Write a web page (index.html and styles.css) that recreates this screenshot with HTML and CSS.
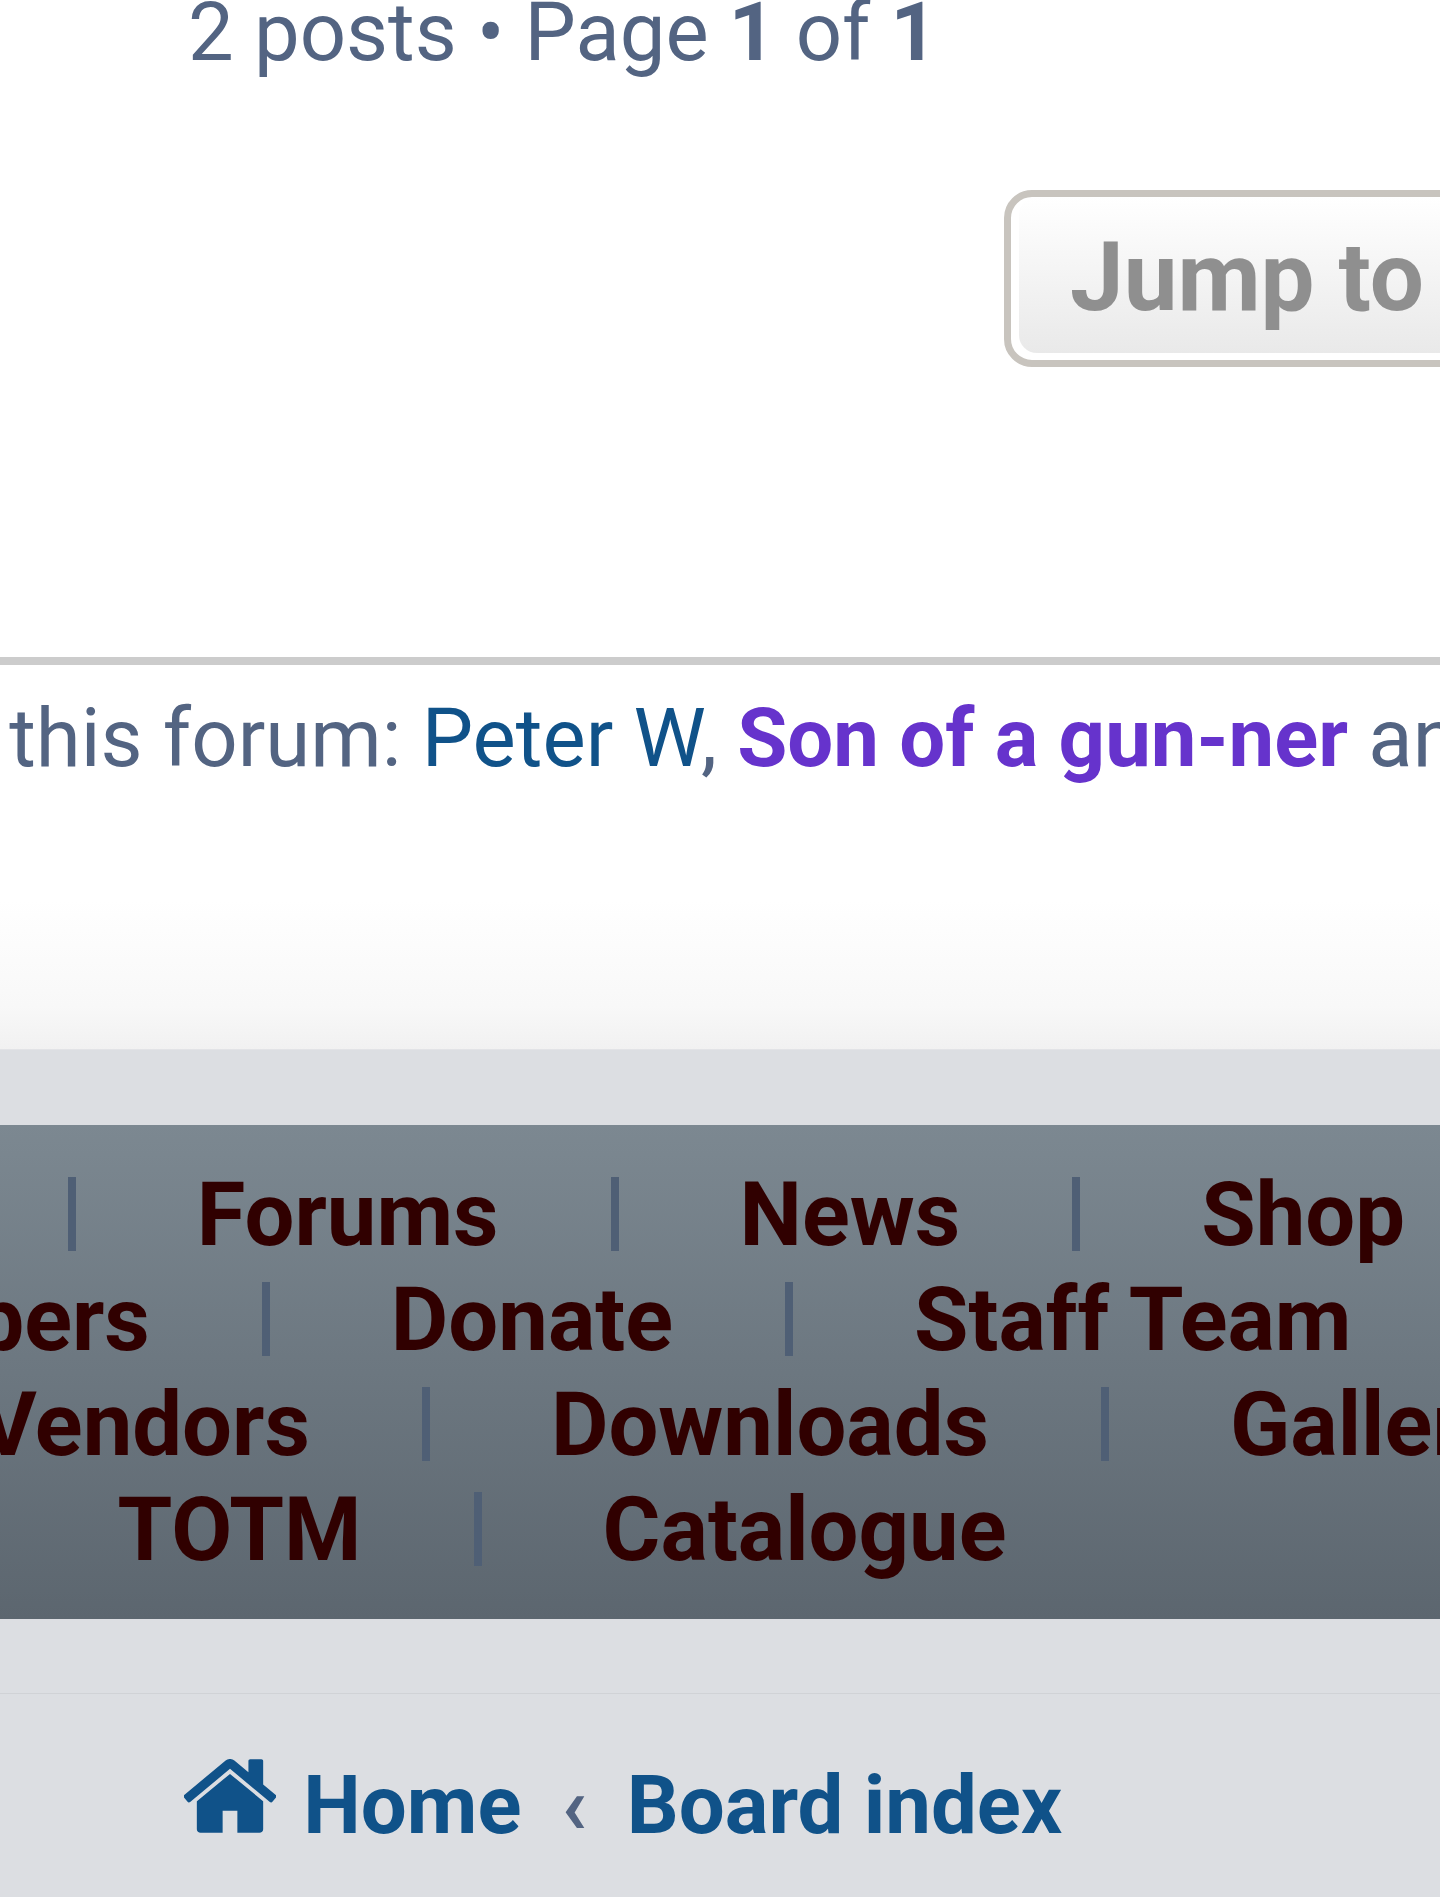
FILE: index.html
```html
<!DOCTYPE html>
<html lang="en">
<head>
  <meta charset="UTF-8" />
  <meta name="viewport" content="width=device-width, initial-scale=1" />
  <title>Board index</title>
  <link rel="stylesheet" href="styles.css">
</head>
<body>
  <div class="wrap">
    <div class="pagination">2 posts • Page <strong>1</strong> of <strong>1</strong></div>

    <div class="action-bar">
      <button class="jump-btn"><span>Jump to</span></button>
    </div>

    <div class="online">
      <p class="online-text">Users browsing this forum: <a href="#">Peter W</a>, <a href="#" class="user-colour">Son of a gun-ner</a> and 5 guests</p>
    </div>
  </div>

  <!-- Main links, rows are centred on a box wider than the window -->
  <nav class="navlinks">
    <div class="nav-row"><a href="#">Home</a><i></i><a href="#">Forums</a><i></i><a href="#">News</a><i></i><a href="#">Shop</a></div>
    <div class="nav-row"><a href="#">Members</a><i></i><a href="#">Donate</a><i></i><a href="#">Staff Team</a></div>
    <div class="nav-row"><a href="#">Art</a><i></i><a href="#">Vendors</a><i></i><a href="#">Downloads</a><i></i><a href="#">Gallery</a></div>
    <div class="nav-row"><a href="#">TOTM</a><i></i><a href="#">Catalogue</a></div>
  </nav>

  <footer class="breadcrumbs">
    <a href="#" class="crumb">
      <svg class="home-icon" viewBox="97 256 1598 1280" aria-hidden="true"><path d="M1472 992v480q0 26-19 45t-45 19h-384v-384h-256v384h-384q-26 0-45-19t-19-45v-480q0-1 .5-3t.5-3l575-474 575 474q1 2 1 6zm223-69l-62 74q-8 9-21 11h-3q-13 0-21-7l-692-577-692 577q-12 8-24 7-13-2-21-11l-62-74q-8-10-7-23.5t11-21.5l719-599q32-26 76-26t76 26l244 204v-195q0-14 9-23t23-9h192q14 0 23 9t9 23v408l219 182q10 8 11 21.5t-7 23.5z"/></svg>
      Home
    </a>
    <span class="crumb-sep">‹</span>
    <a href="#" class="crumb">Board index</a>
  </footer>
</body>
</html>
```

FILE: styles.css
```css
:root {
  --text: #536482;
  --link: #105289;
  --page-bg: #dcdee2;
}

body {
  margin: 0;
  height: 1897px;
  overflow: hidden;
  background: var(--page-bg);
  font-family: Roboto, sans-serif;
  color: var(--text);
}

a {
  color: var(--link);
  text-decoration: none;
}

.wrap {
  display: flow-root;
  height: 1050px;
  background: linear-gradient(to bottom, #fff 0, #fff 900px, #f8f8f8 1006px, #f1f1f1 1050px);
  border-bottom: 1px solid #e2e3e6;
  box-sizing: border-box;
}

.pagination {
  margin-top: -18px;
  padding-left: 188px;
  font-size: 81.4px;
  line-height: 100px;
}

.action-bar {
  display: flex;
  margin-top: 108px;
  padding-left: 1004px;
}

.jump-btn {
  flex: none;
  width: 600px;
  height: 177px;
  padding: 0;
  border: 7px solid #c8c4be;
  border-radius: 28px;
  background: #fff;
  font: 700 96px Roboto, sans-serif;
  color: #8f8f8f;
  text-align: left;
}

.jump-btn span {
  display: block;
  margin: 0 8px 7px;
  height: 156px;
  padding-left: 51px;
  line-height: 160px;
  border-radius: 18px;
  background: linear-gradient(to bottom, #fff, #e9e9e9);
}

.online {
  margin-top: 290px;
  border-top: 8px solid #ccc;
}

.online-text {
  margin: 0 0 0 -572px;
  padding-top: 23px;
  font-size: 81.5px;
  line-height: 100px;
  white-space: nowrap;
}

.user-colour {
  color: #6633cc;
  font-weight: 700;
}

.navlinks {
  width: 2080px;
  margin: 75px 0 0 -478px;
  padding: 36px 0 38px;
  background: linear-gradient(to bottom, #7c8891, #5c666f);
}

.nav-row {
  display: flex;
  justify-content: center;
  align-items: center;
  gap: 112px;
  height: 105px;
  font-size: 88.5px;
  font-weight: 700;
  white-space: nowrap;
}

.nav-row a {
  padding-top: 2px;
  color: #300000;
}

.nav-row i {
  width: 8px;
  height: 74px;
  margin-right: 9px;
  background: #4f5f75;
}

.breadcrumbs {
  display: flex;
  align-items: baseline;
  gap: 40px;
  margin-top: 74px;
  padding: 61px 0 0 184px;
  border-top: 1px solid #d0d2d6;
  font-size: 81.5px;
  font-weight: 700;
  line-height: 100px;
}

.crumb {
  white-space: nowrap;
}

.home-icon {
  width: 92px;
  height: 74px;
  margin-right: 7px;
  fill: var(--link);
}

.crumb-sep {
  color: var(--text);
}
```
